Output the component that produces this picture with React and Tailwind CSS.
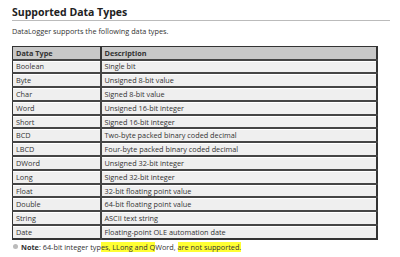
import React from "react";

const rows = [
  ["Boolean", "Single bit"],
  ["Byte", "Unsigned 8-bit value"],
  ["Char", "Signed 8-bit value"],
  ["Word", "Unsigned 16-bit integer"],
  ["Short", "Signed 16-bit integer"],
  ["BCD", "Two-byte packed binary coded decimal"],
  ["LBCD", "Four-byte packed binary coded decimal"],
  ["DWord", "Unsigned 32-bit integer"],
  ["Long", "Signed 32-bit integer"],
  ["Float", "32-bit floating point value"],
  ["Double", "64-bit floating point value"],
  ["String", "ASCII text string"],
  ["Date", "Floating-point OLE automation date"],
];

const App = () => {
  return (
    <div className="w-[400px] h-[257px] bg-white overflow-hidden font-['Open_Sans',sans-serif] text-[#333] pl-[12px] pr-[10px] pt-[6px]">
      <h1 className="text-[10.5px] font-bold text-[#222] leading-[13px] border-b border-[#bbb] pb-[1px]">
        Supported Data Types
      </h1>
      <p className="text-[7.3px] leading-[10px] mt-[5px]">
        DataLogger supports the following data types.
      </p>

      {/* table */}
      <table className="mt-[10px] w-[366px] border-collapse border-t border-l border-r-2 border-b-2 border-[#333] text-[7.3px] leading-[10px]">
        <thead>
          <tr className="bg-[#c8c8c8] h-[13px]">
            <th className="w-[88px] text-left font-bold pl-[3px] border-r-2 border-[#333]">Data Type</th>
            <th className="text-left font-bold pl-[3px]">Description</th>
          </tr>
        </thead>
        <tbody>
          {rows.map(([type, desc]) => (
            <tr key={type} className="bg-[#efefef] h-[13.8px]">
              <td className="pl-[3px] border-t-2 border-[#444] shadow-[inset_0_1px_0_#fff] border-r-2">{type}</td>
              <td className="pl-[3px] border-t-2 border-[#444] shadow-[inset_0_1px_0_#fff]">{desc}</td>
            </tr>
          ))}
        </tbody>
      </table>

      <div className="flex items-center mt-[2px] text-[7.3px] leading-[10px]">
        <span className="w-[5px] h-[5px] rounded-full bg-[#bbb] mr-[3px] ml-[1px]"></span>
        <span>
          <b>Note</b>: 64-bit integer typ
          <span className="bg-[#ffff33]">es, LLong and Q</span>
          Word, <span className="bg-[#ffff33]">are not supported.</span>
        </span>
      </div>
    </div>
  );
};

export default App;
